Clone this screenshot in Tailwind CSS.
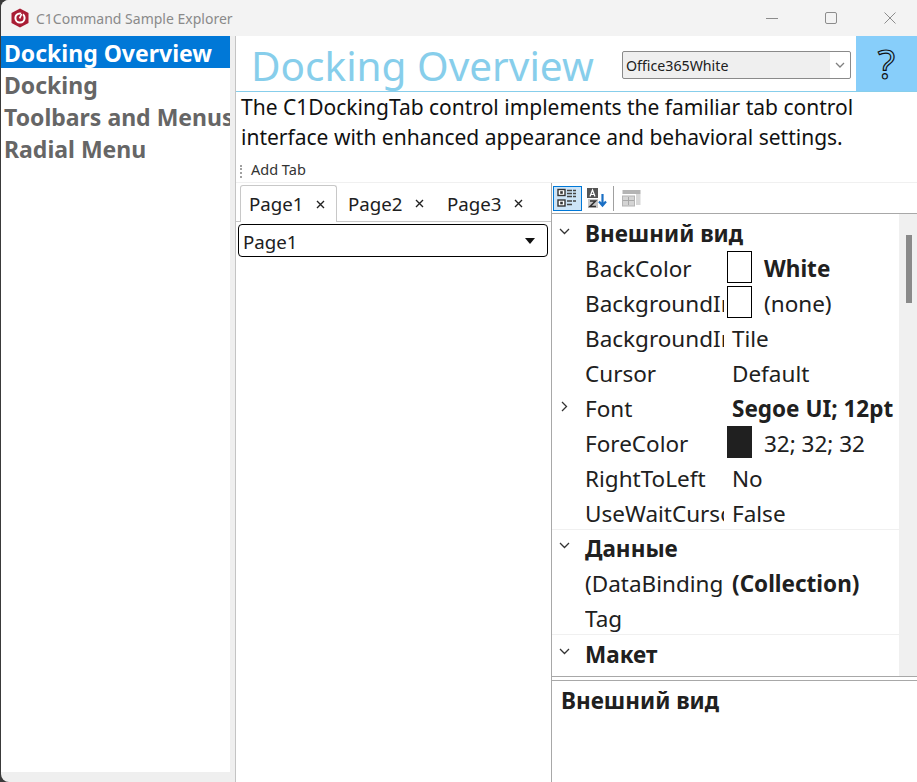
<!DOCTYPE html>
<html lang="en">
<head>
    <meta charset="UTF-8">
    <title>C1Command Sample Explorer</title>
    <script src="https://cdn.jsdelivr.net/npm/@tailwindcss/browser@4"></script>
</head>
<body class="bg-[#3a3a3a] overflow-hidden">
<div class="ml-px w-[916px] h-[782px] bg-[#efefef] rounded-tl-lg rounded-bl-lg overflow-hidden flex flex-col font-['Noto_Sans','Open_Sans',sans-serif] text-[#202020]">

    <!-- Title bar -->
    <div class="h-9 shrink-0 bg-[#f3f3f3] flex items-center">
        <svg class="ml-[9px] w-[20px] h-[20px]" viewBox="0 0 20 20">
            <path d="M10 0.5 L18.5 5 V15 L10 19.5 L1.5 15 V5 Z" fill="#a91d34"/>
            <circle cx="10" cy="10" r="4.6" fill="none" stroke="#fff" stroke-width="2"/>
            <path d="M12.5 5 L8.5 13" stroke="#a91d34" stroke-width="2"/>
            <path d="M11.6 6 L9.6 10.4" stroke="#fff" stroke-width="1.6"/>
        </svg>
        <span class="ml-[6px] text-[14px] text-[#8a8a8a] whitespace-nowrap">C1Command Sample Explorer</span>
        <div class="ml-auto flex items-center text-[#8c8c8c]">
            <svg class="w-3 h-3" viewBox="0 0 12 12"><path d="M0 6.5H12" stroke="currentColor"/></svg>
            <svg class="ml-[47px] w-3 h-3" viewBox="0 0 12 12"><rect x="0.5" y="0.5" width="11" height="11" rx="1.5" fill="none" stroke="currentColor"/></svg>
            <svg class="ml-[47px] mr-[21px] w-3 h-3" viewBox="0 0 12 12"><path d="M0.5 0.5L11.5 11.5M11.5 0.5L0.5 11.5" stroke="currentColor"/></svg>
        </div>
    </div>

    <div class="flex-1 flex min-h-0">
        <!-- Sample list -->
        <div class="w-[229px] shrink-0 h-[736px] bg-white overflow-hidden text-[23px] font-bold leading-[34px] text-[#666666] whitespace-nowrap">
            <div class="h-8 bg-[#0078d7] text-white pl-[3px]">Docking Overview</div>
            <div class="h-8 pl-[3px]">Docking</div>
            <div class="h-8 pl-[3px]">Toolbars and Menus</div>
            <div class="h-8 pl-[3px]">Radial Menu</div>
        </div>
        <div class="w-[5px] shrink-0"></div>

        <!-- Sample content -->
        <div class="flex-1 min-w-0 bg-white border-l border-[#c4c4c4] flex flex-col">
            <div class="h-[56px] shrink-0 border-b border-[#87ceeb] flex">
                <div class="ml-[15px] w-[371px] text-[40.5px] leading-[60px] text-[#87ceeb] whitespace-nowrap">Docking Overview</div>
                <div class="mt-[15px] h-[28px] w-[229px] border border-[#8a8a8a] rounded-[2px] bg-[#efefef] flex items-center text-[14.2px] text-[#202020]">
                    <span class="pl-[3px] pt-px">Office365White</span>
                    <span class="ml-auto h-full w-5 bg-white flex items-center justify-center rounded-r-[2px]">
                        <svg class="w-[10px] h-[6px]" viewBox="0 0 10 6"><path d="M1 1L5 5L9 1" fill="none" stroke="#808080" stroke-width="1.3"/></svg>
                    </span>
                </div>
                <div class="ml-[5px] w-[61px] h-[55px] bg-[#87cefa] flex items-center justify-center text-[40px] leading-none text-[#87cefa] [-webkit-text-stroke:1.2px_#111]">?</div>
            </div>

            <div class="h-[69px] shrink-0 pl-[5px] text-[21px] leading-[30px] text-[#111] whitespace-nowrap">
                The C1DockingTab control implements the familiar tab control<br>interface with enhanced appearance and behavioral settings.
            </div>

            <!-- Add Tab toolbar -->
            <div class="h-[22px] shrink-0 border-b border-[#f0f0f0] flex items-center text-[14.5px] text-[#333]">
                <span class="ml-[4px] h-[13px] border-l-2 border-dotted border-[#a0a0a0]"></span>
                <span class="ml-[9px] -mt-[4px]">Add Tab</span>
            </div>

            <div class="flex-1 min-h-0 flex">
                <!-- Tabs pane -->
                <div class="w-[316px] shrink-0 border-r border-[#a8a8a8] flex flex-col">
                    <div class="h-[39px] shrink-0 pt-[2px] pl-[4px] flex border-b border-[#c8c8c8] text-[18.7px]">
                        <div class="w-[97px] h-[37px] bg-white border border-b-0 border-[#c8c8c8] rounded-t-[3px] flex items-center pl-[8px] -mb-px">
                            <span>Page1</span>
                            <svg class="ml-[12px] w-[9px] h-[9px]" viewBox="0 0 9 9"><path d="M1 1L8 8M8 1L1 8" stroke="#222" stroke-width="1.4"/></svg>
                        </div>
                        <div class="w-[99px] h-[36px] flex items-center pl-[11px] pt-[2px]">
                            <span>Page2</span>
                            <svg class="ml-[12px] -mt-[2px] w-[9px] h-[9px]" viewBox="0 0 9 9"><path d="M1 1L8 8M8 1L1 8" stroke="#222" stroke-width="1.4"/></svg>
                        </div>
                        <div class="h-[36px] flex items-center pl-[11px] pt-[2px]">
                            <span>Page3</span>
                            <svg class="ml-[12px] -mt-[2px] w-[9px] h-[9px]" viewBox="0 0 9 9"><path d="M1 1L8 8M8 1L1 8" stroke="#222" stroke-width="1.4"/></svg>
                        </div>
                    </div>
                    <div class="mt-[2px] ml-[2px] w-[310px] h-[33px] border border-black rounded-[4px] flex items-center pl-[4px] text-[18.7px]">
                        <span class="pt-[3px]">Page1</span>
                        <svg class="ml-auto mr-[12px] w-[10px] h-[6px]" viewBox="0 0 10 6"><path d="M0 0H10L5 6Z" fill="#111"/></svg>
                    </div>
                </div>

                <!-- Property grid -->
                <div class="flex-1 min-w-0 flex flex-col">
                    <div class="h-[30px] shrink-0 flex items-center pl-[1px]">
                        <div class="w-[29px] h-[25px] bg-[#cde4f7] border border-[#0078d7] flex items-center justify-center">
                            <svg class="w-[21px] h-[20px]" viewBox="0 0 21 20">
                                <rect x="1" y="1.5" width="7" height="6" fill="#fff" stroke="#333" stroke-width="1.4"/><rect x="3.2" y="3.2" width="2.6" height="2.6" fill="#333"/>
                                <rect x="1" y="12" width="7" height="6" fill="#fff" stroke="#333" stroke-width="1.4"/><rect x="3.2" y="13.7" width="2.6" height="2.6" fill="#333"/>
                                <path d="M10 2.5H19M10 5.5H19M10 8.5H19M10 13H19M10 16.5H16" stroke="#444" stroke-width="1.6" stroke-dasharray="5 1"/>
                            </svg>
                        </div>
                        <svg class="ml-[4px] w-[22px] h-[22px]" viewBox="0 0 22 22">
                            <rect x="1" y="1" width="11" height="10" fill="#555"/>
                            <path d="M4 9.5L6.5 3L9 9.5M5 7.5H8" fill="none" stroke="#fff" stroke-width="1.2"/>
                            <rect x="2" y="12" width="10" height="9" fill="#c8c8c8"/>
                            <path d="M4 14H9.5L4 19.5H10" fill="none" stroke="#333" stroke-width="1.6"/>
                            <path d="M16.5 7V18M13 14.5L16.5 18.5L20 14.5" fill="none" stroke="#1a6fc4" stroke-width="2.2"/>
                        </svg>
                        <span class="ml-[5px] h-[25px] border-l border-[#a0a0a0]"></span>
                        <svg class="ml-[8px] w-[19px] h-[18px]" viewBox="0 0 19 18">
                            <rect x="0.5" y="1" width="18" height="4" fill="#b4b4b4"/>
                            <rect x="14" y="5" width="4.5" height="11" fill="#d8d8d8"/>
                            <rect x="0.5" y="7" width="12" height="10" fill="#d4d4d4" stroke="#b4b4b4"/>
                            <path d="M6.5 8V16M1 11.5H12" stroke="#a8a8a8"/>
                        </svg>
                    </div>

                    <div class="h-[463px] shrink-0 border-t border-[#a8a8a8] flex overflow-hidden">
                        <div class="w-[347px] shrink-0 overflow-hidden text-[22.5px] leading-[35px] text-[#202020]">
                            <!-- Внешний вид -->
                            <div class="h-[315px] border-b border-[#f0f0f0] box-content">
                                <div class="h-[35px] flex items-center pl-[33px] pt-[4px] font-bold relative whitespace-nowrap">
                                    <svg class="absolute left-[7px] top-[14px] w-[11px] h-[7px]" viewBox="0 0 11 7"><path d="M1 1L5.5 5.5L10 1" fill="none" stroke="#333" stroke-width="1.3"/></svg>
                                    Внешний вид
                                </div>
                                <div class="h-[35px] flex pl-[33px] pt-[2px]">
                                    <span class="w-[139px] shrink-0 overflow-hidden whitespace-nowrap">BackColor</span>
                                    <span class="w-[25px] h-[32px] shrink-0 ml-[3px] border border-black bg-white"></span>
                                    <span class="ml-3 font-bold">White</span>
                                </div>
                                <div class="h-[35px] flex pl-[33px] pt-[2px]">
                                    <span class="w-[139px] shrink-0 overflow-hidden whitespace-nowrap">BackgroundImage</span>
                                    <span class="w-[25px] h-[32px] shrink-0 ml-[3px] border border-black bg-white"></span>
                                    <span class="ml-3">(none)</span>
                                </div>
                                <div class="h-[35px] flex pl-[33px] pt-[2px]">
                                    <span class="w-[139px] shrink-0 overflow-hidden whitespace-nowrap">BackgroundImageLayout</span>
                                    <span class="ml-[8px]">Tile</span>
                                </div>
                                <div class="h-[35px] flex pl-[33px] pt-[2px]">
                                    <span class="w-[139px] shrink-0 overflow-hidden whitespace-nowrap">Cursor</span>
                                    <span class="ml-[8px]">Default</span>
                                </div>
                                <div class="h-[35px] flex pl-[33px] pt-[2px] relative">
                                    <svg class="absolute left-[9px] top-[12px] w-[7px] h-[11px]" viewBox="0 0 7 11"><path d="M1 1L5.5 5.5L1 10" fill="none" stroke="#333" stroke-width="1.3"/></svg>
                                    <span class="w-[139px] shrink-0 overflow-hidden whitespace-nowrap">Font</span>
                                    <span class="ml-[8px] font-bold whitespace-nowrap">Segoe UI; 12pt</span>
                                </div>
                                <div class="h-[35px] flex pl-[33px] pt-[2px]">
                                    <span class="w-[139px] shrink-0 overflow-hidden whitespace-nowrap">ForeColor</span>
                                    <span class="w-[25px] h-[32px] shrink-0 ml-[3px] bg-[#202020]"></span>
                                    <span class="ml-3">32; 32; 32</span>
                                </div>
                                <div class="h-[35px] flex pl-[33px] pt-[2px]">
                                    <span class="w-[139px] shrink-0 overflow-hidden whitespace-nowrap">RightToLeft</span>
                                    <span class="ml-[8px]">No</span>
                                </div>
                                <div class="h-[35px] flex pl-[33px] pt-[2px]">
                                    <span class="w-[139px] shrink-0 overflow-hidden whitespace-nowrap">UseWaitCursor</span>
                                    <span class="ml-[8px]">False</span>
                                </div>
                            </div>
                            <!-- Данные -->
                            <div class="h-[104px] border-b border-[#f0f0f0] box-content">
                                <div class="h-[35px] flex items-center pl-[33px] pt-[2px] font-bold relative">
                                    <svg class="absolute left-[7px] top-[12px] w-[11px] h-[7px]" viewBox="0 0 11 7"><path d="M1 1L5.5 5.5L10 1" fill="none" stroke="#333" stroke-width="1.3"/></svg>
                                    Данные
                                </div>
                                <div class="h-[35px] flex pl-[33px] pt-[1px]">
                                    <span class="w-[139px] shrink-0 overflow-hidden whitespace-nowrap">(DataBindings)</span>
                                    <span class="ml-[8px] font-bold whitespace-nowrap">(Collection)</span>
                                </div>
                                <div class="h-[34px] flex pl-[33px] pt-[1px]">
                                    <span class="w-[139px] shrink-0 overflow-hidden whitespace-nowrap">Tag</span>
                                </div>
                            </div>
                            <!-- Макет -->
                            <div class="h-[35px] flex items-center pl-[33px] pt-[3px] font-bold relative">
                                <svg class="absolute left-[7px] top-[13px] w-[11px] h-[7px]" viewBox="0 0 11 7"><path d="M1 1L5.5 5.5L10 1" fill="none" stroke="#333" stroke-width="1.3"/></svg>
                                Макет
                            </div>
                        </div>
                        <div class="flex-1 bg-[#f0f0f0] pt-[21px] pl-[7px]">
                            <div class="w-[6px] h-[68px] bg-[#8a8a8a]"></div>
                        </div>
                    </div>

                    <div class="h-[4px] shrink-0 border-t border-[#a8a8a8] bg-white"></div>
                    <div class="flex-1 border-t border-[#a8a8a8] pl-[9px] pt-[2px] text-[22.5px] font-bold leading-[35px]">Внешний вид</div>
                </div>
            </div>
        </div>
    </div>
</div>
</body>
</html>
